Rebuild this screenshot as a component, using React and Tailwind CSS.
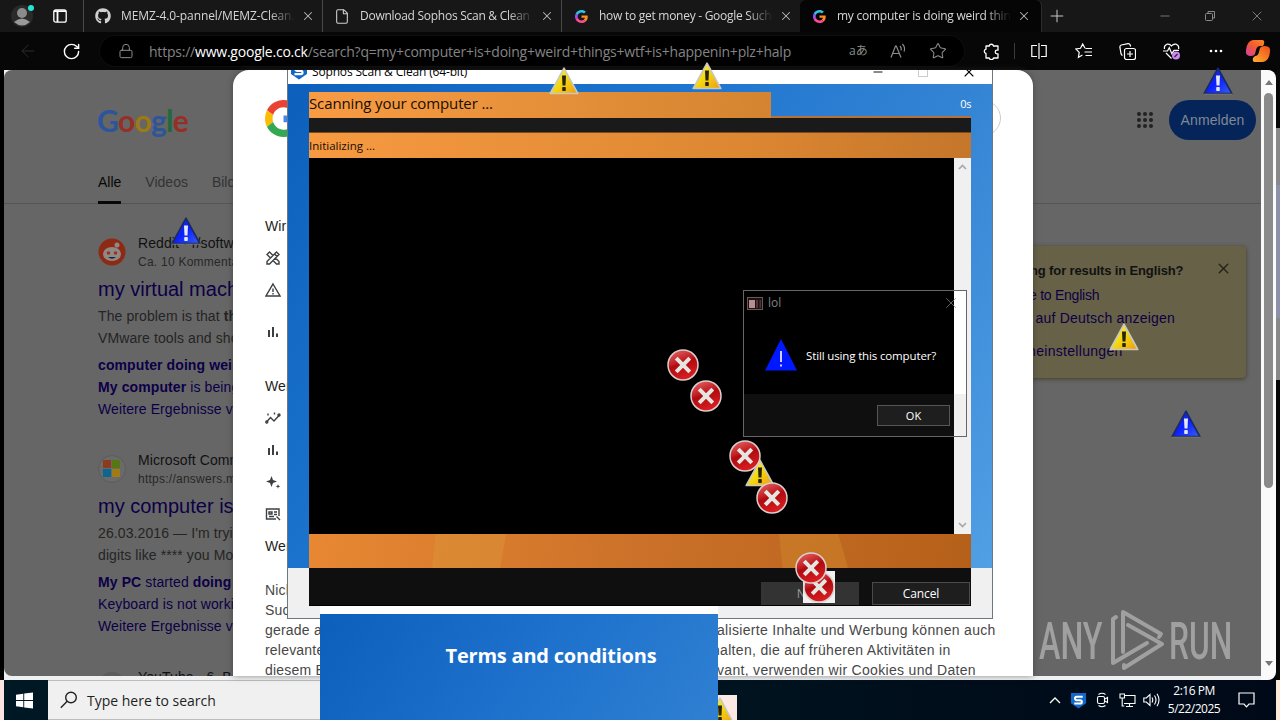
import clsx from 'clsx';
import { Minus, Plus, X, File, Lock, RotateCw, ArrowLeft, Star } from 'lucide-react';
import { FaGithub } from 'react-icons/fa';

const UI = "font-['Open_Sans','Noto_Sans_CJK_JP',sans-serif]";

const tabs = [
  { title: 'MEMZ-4.0-pannel/MEMZ-Clean.exe', icon: 'github', spacing: 'tracking-[-0.1px]' },
  { title: 'Download Sophos Scan & Clean', icon: 'file', spacing: 'tracking-[-0.27px]' },
  { title: 'how to get money - Google Suche', icon: 'google', spacing: 'tracking-[-0.27px]' },
  { title: 'my computer is doing weird things', icon: 'google', spacing: 'tracking-[-0.24px]', active: true },
];

const cursors = [
  { type: 'warning', x: 549, y: 67 },
  { type: 'warning', x: 692, y: 62 },
  { type: 'warning', x: 1109, y: 323 },
  { type: 'info', x: 171, y: 217 },
  { type: 'info', x: 1203, y: 67 },
  { type: 'info', x: 1171, y: 410 },
  { type: 'error', x: 667, y: 349 },
  { type: 'error', x: 690, y: 380 },
  { type: 'warning', x: 745, y: 459 },
  { type: 'error', x: 729, y: 440 },
  { type: 'error', x: 756, y: 482 },
  { type: 'error', x: 803, y: 571, boxed: true },
  { type: 'error', x: 795, y: 552 },
];

function Triangle({ blue }) {
  const id = blue ? 'tri-blue' : 'tri-yellow';
  return (
    <svg width="30" height="28" viewBox="0 0 30 28">
      <defs>
        <linearGradient id={id} x1="0" y1="0" x2="1" y2="1">
          <stop offset="0" stopColor={blue ? '#2030c0' : '#fff45a'} />
          <stop offset="0.5" stopColor={blue ? '#0a20ff' : '#f3d810'} />
          <stop offset="1" stopColor={blue ? '#3a60f0' : '#f09a10'} />
        </linearGradient>
      </defs>
      <path d="M15 1.2 L28.8 26.5 H1.2 Z" fill={`url(#${id})`} stroke={blue ? '#1a2a60' : '#c9c8c0'} strokeWidth="1.6" strokeLinejoin="round" />
      {blue && <path d="M1 27.2H29" stroke="#8a8a70" strokeWidth="0.8" />}
      <path d="M13 8.5h4l-.5 10h-3z" fill={blue ? '#e6e8ff' : '#282408'} />
      <rect x="13.2" y="20" width="3.6" height="4" rx="0.8" fill={blue ? '#e6e8ff' : '#282408'} />
    </svg>
  );
}

function ErrorIcon() {
  return (
    <svg width="32" height="32" viewBox="0 0 32 32">
      <defs>
        <linearGradient id="err" x1="0" y1="0" x2="0.4" y2="1">
          <stop offset="0" stopColor="#e87070" />
          <stop offset="0.45" stopColor="#c22024" />
          <stop offset="0.55" stopColor="#b00a10" />
          <stop offset="1" stopColor="#d81c20" />
        </linearGradient>
      </defs>
      <circle cx="16" cy="16" r="15" fill="url(#err)" stroke="#d9d0cf" strokeWidth="1.5" />
      <path d="M9.2 9.2l13.6 13.6M22.8 9.2L9.2 22.8" stroke="#e6e6e0" strokeWidth="4" />
    </svg>
  );
}

function GoogleG({ size = 14, neon }) {
  const c = neon ? ['#30c0e8', '#a050ff', '#ff4a90', '#ff8a20'] : ['#ea4335', '#fbbc05', '#34a853', '#4285f4'];
  return (
    <svg width={size} height={size} viewBox="0 0 48 48">
      <path fill={c[0]} d="M24 9.5c3.54 0 6.71 1.22 9.21 3.6l6.85-6.85C35.9 2.38 30.47 0 24 0 14.62 0 6.51 5.38 2.56 13.22l7.98 6.19C12.43 13.72 17.74 9.5 24 9.5z" />
      <path fill={c[3]} d="M46.98 24.55c0-1.57-.15-3.09-.38-4.55H24v9.02h12.94c-.58 2.96-2.26 5.48-4.78 7.18l7.73 6c4.51-4.18 7.09-10.36 7.09-17.65z" />
      <path fill={c[1]} d="M10.53 28.59A14.5 14.5 0 0 1 9.77 24c0-1.6.27-3.14.76-4.59l-7.98-6.19A23.94 23.94 0 0 0 0 24c0 3.88.92 7.54 2.56 10.78z" />
      <path fill={c[2]} d="M24 48c6.48 0 11.93-2.13 15.89-5.81l-7.73-6c-2.15 1.45-4.92 2.3-8.16 2.3-6.26 0-11.57-4.22-13.47-9.91l-7.98 6.19C6.51 42.62 14.62 48 24 48z" />
    </svg>
  );
}

function Sophos({ size = 18 }) {
  return (
    <svg width={size} height={size} viewBox="0 0 18 18">
      <path d="M1 1h16v11l-8 5.5L1 12z" fill="#1268c8" />
      <path d="M13.5 5H7.2a1.8 1.8 0 0 0 0 3.8h3.6a1.7 1.7 0 0 1 0 3.4H4.5" stroke="#fff" strokeWidth="2.2" fill="none" />
    </svg>
  );
}

function Tab({ tab, last }) {
  return (
    <div
      className={clsx(
        'flex h-8 items-center pl-[11px]',
        tab.active ? 'w-[242px] border-r border-[#2c2c2c] bg-[#050505]' : 'w-[239px] border-l border-[#4a4a4a]',
        last && 'rounded-t-md'
      )}
    >
      <div className="flex w-4 justify-center text-[#d0d0d0]">
        {tab.icon === 'github' && <FaGithub size={16} />}
        {tab.icon === 'file' && <File size={17} strokeWidth={1.6} />}
        {tab.icon === 'google' && <GoogleG size={13} neon />}
      </div>
      <div className={clsx('ml-[10px] w-[174px] overflow-hidden text-xs whitespace-nowrap text-[#d6d6d6] [mask-image:linear-gradient(to_right,black_85%,transparent)]', tab.spacing)}>
        {tab.title}
      </div>
      <X size={14} strokeWidth={1.8} className="ml-[6px] text-[#b8b8b8]" />
    </div>
  );
}

function TabStrip() {
  return (
    <div className="flex h-8 items-center bg-[#171717]">
      <div className="flex w-[83px] items-center pl-[11px]">
        <svg width="24" height="24" viewBox="0 0 24 24">
          <circle cx="11" cy="12" r="11" fill="#2a2a2a" />
          <circle cx="11" cy="9" r="5" fill="#8b8b8b" />
          <path d="M3 18q8-7 16 0q-8 7-16 0" fill="#9a9a9a" />
          <circle cx="20" cy="4" r="3" fill="#20e8d8" />
        </svg>
        <svg className="ml-[18px]" width="14" height="14" viewBox="0 0 14 14" fill="none" stroke="#fff" strokeWidth="1.3">
          <rect x="0.8" y="0.8" width="12.4" height="12.4" rx="2" />
          <path d="M1 2.2h12M4.5 3v10" strokeWidth="1.8" />
        </svg>
      </div>
      {tabs.map((tab, i) => (
        <Tab key={tab.title} tab={tab} last={i === 3} />
      ))}
      <Plus size={20} strokeWidth={1.2} className="ml-[5px] text-[#c8c8c8]" />
      <div className="ml-auto flex items-center gap-[32px] pr-[15px] text-[#8a8a8a]">
        <Minus size={14} strokeWidth={1.4} />
        <svg width="13" height="12" viewBox="0 0 13 12" fill="none" stroke="currentColor">
          <rect x="1.5" y="3.5" width="7" height="7" rx="1" />
          <path d="M4 3V1.5h6.5V8H9" />
        </svg>
        <X size={16} strokeWidth={1.3} />
      </div>
    </div>
  );
}

function Toolbar() {
  return (
    <div className="flex h-[38px] items-center bg-[#070707]">
      <ArrowLeft size={20} strokeWidth={1} className="ml-[18px] text-[#333]" />
      <RotateCw size={19} strokeWidth={1.8} className="ml-6 text-white" />
      <div className="ml-[19px] flex h-[30px] w-[864px] items-center rounded-full bg-black pl-[18px] text-[#8c8c8c] shadow-[0_0_0_1px_#0e0e0e]">
        <Lock size={16} strokeWidth={1.5} />
        <div className="ml-[15px] w-[700px] shrink-0 text-[14px] tracking-[-0.22px] whitespace-nowrap text-[#848484]">
          https://<span className="text-white">www.google.co.ck</span>/search?q=my+computer+is+doing+weird+things+wtf+is+happenin+plz+halp
        </div>
        <div className="w-[19px] text-xs leading-none whitespace-nowrap">aあ</div>
        <svg className="ml-[22px]" width="17" height="16" viewBox="0 0 17 16" fill="none" stroke="currentColor" strokeWidth="1.2">
          <path d="M1 14.5 5.5 3h.8L11 14.5M2.6 10.5h6.8M10 3q2 2 1 4.5M12.3 1q3.3 3 1.8 7.5" />
        </svg>
        <Star size={18} strokeWidth={1.4} className="ml-[22px]" />
      </div>
      <div className="ml-[19px] flex items-center text-white">
        <svg width="17" height="17" viewBox="0 0 17 17" fill="none" stroke="currentColor" strokeWidth="1.3" strokeLinejoin="round">
          <path d="M3 3h3.2a2.2 2.2 0 0 1 4.3 0H15v4.2h-1a1.8 1.8 0 0 0 0 3.6h1V15h-4.5a2.2 2.2 0 0 1-4.3 0H3v-4.5a2.2 2.2 0 0 1 0-4.3z" />
        </svg>
        <div className="ml-[14px] h-4 w-px bg-[#3a3a3a]" />
        <svg className="ml-[16px]" width="16" height="16" viewBox="0 0 16 16" fill="none" stroke="currentColor" strokeWidth="1.2">
          <path d="M8 0v16M6 2.5H.8v11H6M10 2.5h5.2v11H10" />
        </svg>
        <svg className="ml-[28px]" width="17" height="16" viewBox="0 0 17 16" fill="none" stroke="currentColor" strokeWidth="1.2">
          <path d="M10 5.3 7.7 1 5.5 5.3.8 6l3.4 3.4-.8 5 4-2.3M10.5 5.5H17M9.5 9H17M10.5 12.5H17" />
        </svg>
        <svg className="ml-[27px]" width="17" height="17" viewBox="0 0 17 17" fill="none" stroke="currentColor" strokeWidth="1.2">
          <rect x="5.5" y="5.5" width="11" height="11" rx="2" />
          <path d="M11 8v6M8 11h6M3.5 12.5Q2.4 12 2 10.5L.9 4.2Q.7 2.6 2.3 2L9 .7q1.7-.2 2.2 1.3l.4 1.5" />
        </svg>
        <svg className="ml-[27px]" width="18" height="17" viewBox="0 0 18 17" fill="none" stroke="currentColor" strokeWidth="1.2">
          <path d="M1.5 6Q.8 2.4 4 1.2 6.8.6 8.5 3 10.4.5 13.2 1.2q3.1 1.2 2.4 4.8M3 10l5.5 5.5M0 8h4.5L6.3 4.7l2.5 6L11 7.3h5" />
          <circle cx="13" cy="12.5" r="4" fill="#c98bea" stroke="none" />
          <path d="M11.5 14l3-3" stroke="#3b1650" />
        </svg>
        <svg className="ml-[27px]" width="16" height="4" viewBox="0 0 16 4" fill="currentColor">
          <circle cx="3" cy="2" r="1.3" /><circle cx="8" cy="2" r="1.3" /><circle cx="13" cy="2" r="1.3" />
        </svg>
        <svg className="ml-[21px]" width="26" height="24" viewBox="0 0 26 24">
          <defs>
            <linearGradient id="cop1" x1="1" y1="0" x2="0" y2="1"><stop stopColor="#ff8a20" /><stop offset="0.5" stopColor="#f05a30" /><stop offset="1" stopColor="#d83bb0" /></linearGradient>
            <linearGradient id="cop2" x1="0" y1="1" x2="1" y2="0"><stop stopColor="#ffb030" /><stop offset="1" stopColor="#f04a18" /></linearGradient>
          </defs>
          <path d="M8 1h9q3 0 2 4l-1 2h-3q-3 0-4 4l-1 4q-1 2-4 2-6 0-5-6 1-9 7-10" fill="url(#cop1)" />
          <path d="M18 23H10q-3 0-2-4l2-2q3 0 4-4l1-4q1-2 5-2 6 0 5 6-1 9-7 10" fill="url(#cop2)" />
        </svg>
      </div>
    </div>
  );
}

function Result({ icon, site, url, title, lines, links }) {
  return (
    <div className="h-[217px] shrink-0 whitespace-nowrap">
      <div className="flex">
        <div className="mt-1 h-7 w-7">{icon}</div>
        <div className="ml-3">
          <div className="h-[19px] text-sm leading-[19px] tracking-[0.1px] text-[#111]">{site}</div>
          <div className="h-[18px] text-xs leading-[18px] tracking-[0.25px] text-[#262626]">{url}</div>
        </div>
      </div>
      <div className="mt-1 h-7 text-xl leading-7 text-[#0c0046]">{title}</div>
      <div className="mt-0.5 text-sm leading-[22px] tracking-[0.1px] text-[#242424]">
        {lines.map((line, i) => <div key={i}>{line}</div>)}
      </div>
      <div className="mt-[5px] text-sm leading-[22px] tracking-[0.1px] text-[#0c0046]">
        {links.map((link, i) => <div key={i}>{link}</div>)}
      </div>
    </div>
  );
}

const redditIcon = (
  <svg width="28" height="28" viewBox="0 0 28 28">
    <circle cx="14" cy="14" r="13.5" fill="#8e2a14" />
    <ellipse cx="14" cy="16" rx="9" ry="7" fill="#8f8a88" />
    <circle cx="19" cy="7" r="2.5" fill="#8f8a88" />
    <circle cx="10.5" cy="15" r="1.8" fill="#a03018" />
    <circle cx="17.5" cy="15" r="1.8" fill="#a03018" />
    <path d="M10 19q4 3.5 8 0z" fill="#102830" />
  </svg>
);

const microsoftIcon = (
  <svg width="28" height="28" viewBox="0 0 28 28">
    <circle cx="14" cy="14" r="13.5" fill="#6a6a6a" stroke="#5c5c5c" />
    <path d="M5 5h8v8H5z" fill="#8e3a1c" />
    <path d="M14 5h8v8h-8z" fill="#557812" />
    <path d="M5 14h8v8H5z" fill="#0b6790" />
    <path d="M14 14h8v8h-8z" fill="#a07a12" />
  </svg>
);

function SearchPage() {
  return (
    <div className="flex h-[606px] w-[1257px] flex-col overflow-hidden rounded-tl-lg rounded-bl-lg bg-[#666] font-['Liberation_Sans',sans-serif]">
      <div className="flex h-[98px] shrink-0 items-center justify-between pt-px pr-[5px] pl-[93px]">
        <div className="font-['Lato',sans-serif] text-[30px] leading-none font-bold tracking-[-0.7px] text-[#2c559c]">
          G<span className="text-[#962f27]">o</span><span className="text-[#9c7a14]">o</span>g<span className="text-[#24693a]">l</span><span className="text-[#962f27]">e</span>
        </div>
        <div className="flex items-center gap-4">
          <svg width="16" height="16" viewBox="0 0 16 16" fill="#222">
            {[2, 8, 14].map((x) => [2, 8, 14].map((y) => <circle key={`${x}-${y}`} cx={x} cy={y} r="2" />))}
          </svg>
          <div className="flex h-10 w-[87px] items-center justify-center rounded-full bg-[#05245a] text-sm tracking-[0.1px] text-[#7f8894]">Anmelden</div>
        </div>
      </div>
      <div className="flex h-9 shrink-0 gap-6 border-b border-[#555] pl-[94px] text-sm leading-7 text-[#333]">
        <div className="h-9 border-b-[3px] border-[#080808] text-[#080808]">Alle</div>
        <div>Videos</div>
        <div>Bilder</div>
      </div>
      <div className="flex justify-between pr-[15px] pl-[94px]">
        <div className="pt-[30px]">
          <Result
            icon={redditIcon}
            site="Reddit · r/software"
            url="Ca. 10 Kommentare"
            title="my virtual machine"
            lines={[<>The problem is that <b>things</b></>, 'VMware tools and should']}
            links={[<b>computer doing weird</b>, <><b>My computer</b> is being</>, 'Weitere Ergebnisse von']}
          />
          <Result
            icon={microsoftIcon}
            site="Microsoft Community"
            url="https://answers.microsoft"
            title="my computer is"
            lines={["26.03.2016 — I'm trying", 'digits like **** you Mobile']}
            links={[<><b>My PC</b> started <b>doing</b></>, 'Keyboard is not working', 'Weitere Ergebnisse von']}
          />
          <Result icon={<div className="h-7 w-7 rounded-full bg-[#5c5c5c]" />} site="YouTube · 6. Beitrag" url="" title="" lines={[]} links={[]} />
        </div>
        <div className="mt-[42px] flex h-[132px] w-[300px] justify-between rounded-sm bg-[#676147] pt-[13px] pr-[14px] shadow-[0_1px_4px_#403c2a]">
          <div className="flex w-[236px] flex-col text-sm tracking-[0.2px] whitespace-nowrap text-[#0c0046]">
            <div className="h-[23px] pl-[50px] text-[13px] leading-[23px] font-bold tracking-[-0.13px] text-[#111]">Looking for results in English?</div>
            <div className="mt-[2px] h-[23px] pl-[43px] leading-[23px] tracking-[-0.25px]">Change to English</div>
            <div className="h-[23px] pl-[44px] leading-[23px]">Weiter auf Deutsch anzeigen</div>
            <div className="mt-[10px] h-[23px] pl-[44px] leading-[23px] tracking-[0.3px]">Spracheinstellungen</div>
          </div>
          <X size={17} strokeWidth={2} className="mt-[1px] text-[#26241a]" />
        </div>
      </div>
    </div>
  );
}

function ListIcon({ kind }) {
  return (
    <svg width="16" height="16" viewBox="0 0 16 16" fill="none" stroke="#3c4043" strokeWidth="1.4">
      {kind === 'tools' && <path d="M5.5 8L2 4.5 4.5 2 8 5.5M8 10.5l3.5 3.5H14v-2.5L10.5 8M2 14v-2.5L11.5 2 14 4.5 4.5 14zM9.5 4L12 6.5" />}
      {kind === 'warn' && <><path d="M8 2L15 14H1z" /><path d="M8 6.5v3.5M8 11v1.5" /></>}
      {kind === 'bars' && <path d="M4 6v7M8 3v10M12 9.5V13" strokeWidth="2" />}
      {kind === 'trend' && <><path d="M1.5 12l4-4.5L9 11l5.5-6" /><circle cx="1.8" cy="12" r="1" /><circle cx="14" cy="5" r="1" /><path d="M3 3.5v2M9.5 2.5v2" /></>}
      {kind === 'spark' && <path d="M6.5 2l1.5 4 4 1.5-4 1.5-1.5 4-1.5-4-4-1.5 4-1.5zM13 10l.6 1.8 1.8.6-1.8.6-.6 1.8-.6-1.8-1.8-.6 1.8-.6z" fill="#3c4043" stroke="none" />}
      {kind === 'card' && <path d="M11 13H1.5V3h12.5v7M4 6h3v2H4zM9 6h3M9 8.5h3M4 10.5h5M11.5 10.5l3.5 3.5" />}
    </svg>
  );
}

function ConsentDialog() {
  return (
    <div className="absolute top-[70px] left-[233px] h-[606px] w-[800px] overflow-hidden rounded-t-2xl bg-white px-8 font-['Liberation_Sans',sans-serif] text-sm tracking-[0.1px] whitespace-nowrap text-[#1f1f1f] shadow-[0_0_6px_#3338]">
      <div className="mt-[30px] flex h-9 justify-between">
        <GoogleG size={37} />
        <div className="h-9 w-24 rounded-full border border-[#ccc]" />
      </div>
      <div className="mt-[80px] h-5 leading-5">Wir verwenden Cookies und Daten, um</div>
      <div className="mt-[14px] flex flex-col">
        <div className="flex h-8 items-start"><ListIcon kind="tools" /></div>
        <div className="flex h-[42px] items-start"><ListIcon kind="warn" /></div>
        <div className="flex h-[52px] items-start"><ListIcon kind="bars" /></div>
      </div>
      <div className="h-5 leading-5">Wenn Sie „Alle akzeptieren“ auswählen</div>
      <div className="mt-[14px] flex h-[126px] flex-col gap-4">
        <ListIcon kind="trend" />
        <ListIcon kind="bars" />
        <ListIcon kind="spark" />
        <ListIcon kind="card" />
      </div>
      <div className="h-5 leading-5">Wenn Sie „Alle ablehnen“ auswählen</div>
      <div className="mt-6 leading-5 tracking-[0.2px] text-[#474747]">
        <div>Nicht personalisierte Inhalte</div>
        <div>Suchanfragen</div>
        <div className="flex"><span className="w-[452px]">gerade ansehen</span><span className="tracking-[0.31px]">alisierte Inhalte und Werbung können auch</span></div>
        <div className="flex"><span className="w-[447px]">relevantere</span><span className="tracking-[0.31px]">halten, die auf früheren Aktivitäten in</span></div>
        <div className="flex"><span className="w-[452px]">diesem Browser</span><span className="tracking-[0.31px]">vant, verwenden wir Cookies und Daten</span></div>
      </div>
    </div>
  );
}

function LolDialog() {
  return (
    <div className="absolute top-[290px] left-[743px] flex h-[147px] w-[224px] flex-col border border-[#6a6464] bg-[linear-gradient(to_right,black_210px,white_210px)] text-xs text-white">
      <div className="flex h-6 items-center pl-[3px]">
        <svg width="16" height="13" viewBox="0 0 16 13">
          <rect x="0.5" y="0.5" width="15" height="12" fill="#1c1013" stroke="#6e5558" />
          <path d="M2 3h6v8H2z" fill="#b48e92" />
          <path d="M9 3h2v8H9zM12.5 3h1.5v8h-1.5z" fill="#4a3438" />
        </svg>
        <span className="ml-[5px] text-[#808080]">lol</span>
        <X size={18} strokeWidth={1} className="mr-[6px] ml-auto text-[#808080]" />
      </div>
      <div className="flex h-[79px] items-center pt-[2px] pl-[21px]">
        <svg className="-mt-[2px]" width="32" height="32" viewBox="0 0 32 32">
          <path d="M16 0L32 31.5H0z" fill="#0018ff" />
          <path d="M16 12v11M16 25.5v2" stroke="#fff" strokeWidth="1.6" />
        </svg>
        <span className="ml-[9px] text-[11.5px] tracking-[-0.14px] whitespace-nowrap">Still using this computer?</span>
      </div>
      <div className="flex flex-1 items-center justify-end bg-[linear-gradient(to_right,#0f0f0f_210px,#f0f0f0_210px)] pr-4">
        <div className="flex h-[21px] w-[73px] items-center justify-center border border-[#565656] bg-[#1e1e1e] pt-[2px] text-[11px]">OK</div>
      </div>
    </div>
  );
}

function Chevron({ down }) {
  return (
    <svg width="9" height="6" viewBox="0 0 9 6" fill="none" stroke="#a9a9a9" strokeWidth="1.7">
      <path d={down ? 'M1 1l3.5 3.5L8 1' : 'M1 5l3.5-3.5L8 5'} />
    </svg>
  );
}

function SophosWindow() {
  return (
    <div className="absolute top-[70px] left-[287px] flex h-[549px] w-[706px] flex-col overflow-hidden border-x border-b border-[#6d7780] bg-[#f0f0f0]">
      <div className="flex h-[14px] shrink-0 items-center bg-white text-black">
        <div className="-mt-[13px] ml-[2px]"><Sophos /></div>
        <span className="-mt-[11px] ml-[4px] text-xs tracking-[-0.16px]">Sophos Scan &amp; Clean (64-bit)</span>
        <div className="mr-[15px] ml-auto flex items-center gap-[33px]">
          <Minus size={14} strokeWidth={1.6} className="-mt-[11px]" />
          <div className="-mt-[10px] h-[10px] w-[10px] border border-[#ccc]" />
          <X size={16} strokeWidth={1.6} className="-mt-[10px]" />
        </div>
      </div>
      <div className="h-[484px] shrink-0 bg-[linear-gradient(125deg,#0c60bb_0%,#1c74cf_35%,#3383d4_65%,#519fe4_100%)] px-[21px] pt-2">
        <div className="flex h-[514px] w-[662px] flex-col">
          <div className="flex h-[26px] justify-between">
            <div className="flex h-[26px] w-[462px] items-center bg-[linear-gradient(100deg,#f89c44,#d48430)] pb-[3px] text-[15px] tracking-[-0.12px] text-[#1a0d04]">Scanning your computer ...</div>
            <div className="flex h-[26px] flex-1 items-center justify-end border-b-2 border-[#b87038] text-[11px] tracking-[-0.4px] text-white">0s</div>
          </div>
          <div className="h-[15px] border-b border-[#7a4a20] bg-[#1a1a1a]" />
          <div className="flex h-[25px] items-center bg-[linear-gradient(100deg,#f79a42,#dd8732_65%,#c4762a)] text-[11.5px] text-[#1a0d04]">Initializing ...</div>
          <div className="flex h-[376px] bg-black">
            <div className="ml-auto flex w-[17px] flex-col items-center justify-between bg-[#f0f0f0] py-[6px]">
              <Chevron />
              <Chevron down />
            </div>
          </div>
          <div className="flex h-[34px] bg-[linear-gradient(100deg,#e88833,#cb7129_50%,#b5601a)]">
            <div className="ml-[123px] h-full w-[74px] bg-[#db9036]/60 [clip-path:polygon(5%_0,100%_0,92%_100%,0_100%)]" />
            <div className="ml-[273px] h-full w-[69px] bg-[#cc8028]/60 [clip-path:polygon(0_0,86%_0,100%_100%,5%_100%)]" />
          </div>
          <div className="flex h-[38px] items-start justify-end gap-[13px] border-b border-black bg-[#0f0f0f] pt-[14px] pr-px text-xs">
            <div className="flex h-[23px] w-[98px] items-center justify-center border border-[#343434] bg-[#333] text-[#999]">Next</div>
            <div className="flex h-[23px] w-[98px] items-center justify-center border border-[#4a4a4a] bg-[#1e1e1e] tracking-[-0.1px] text-white">Cancel</div>
          </div>
        </div>
      </div>
    </div>
  );
}

function Taskbar() {
  return (
    <div className="flex h-10 bg-[linear-gradient(to_right,#001420_55%,#000d1a_75%,#000918)]">
      <div className="w-1 bg-[#fde6e2]" />
      <div className="flex w-11 items-center justify-center bg-[#001824] pr-[3px]">
        <svg width="17" height="17" viewBox="0 0 17 17" fill="#fff">
          <path d="M0 2.8l7.3-1V8H0zM8.2 1.6L17 .4V8H8.2zM0 9h7.3v6.2L0 14.2zM8.2 9H17v7.6l-8.8-1.2z" />
        </svg>
      </div>
      <div className="flex w-[344px] items-center border-y border-[#bcbcbc] bg-[#f0f0f0] pl-[12px] text-[#1f1f1f]">
        <svg width="18" height="18" viewBox="0 0 18 18" fill="none" stroke="#222" strokeWidth="1.4">
          <circle cx="11" cy="6.5" r="5.3" />
          <path d="M7.2 10.3L.8 16.8" />
        </svg>
        <span className="ml-[9px] text-[14px]">Type here to search</span>
      </div>
      <div className="ml-auto flex items-center pr-[21px] text-white">
        <svg width="12" height="8" viewBox="0 0 12 8" fill="none" stroke="currentColor" strokeWidth="1.3"><path d="M1 7l5-5 5 5" /></svg>
        <div className="ml-[9px]"><Sophos size={17} /></div>
        <svg className="ml-[9px]" width="14" height="16" viewBox="0 0 14 16" fill="none" stroke="currentColor" strokeWidth="1.1">
          <rect x="1.5" y="4.5" width="7" height="7" rx="1.5" />
          <path d="M9 7l2.5-1.5v5L9 9M2.5 2.5q3.5-2.5 7 0M2.5 13.5q3.5 2.5 7 0" />
        </svg>
        <svg className="ml-[9px]" width="17" height="15" viewBox="0 0 17 15" fill="none" stroke="currentColor" strokeWidth="1.1">
          <path d="M6 2.5h10v8H5M10.5 10.5v3M7 13.5h7M1 1h4.5v4H1zM3.2 5v8h2" />
        </svg>
        <svg className="ml-[7px]" width="17" height="14" viewBox="0 0 17 14" fill="none" stroke="currentColor" strokeWidth="1.1">
          <path d="M.8 5h2.5L7 1.5v11L3.3 9H.8zM9 4.5q1.5 2.5 0 5M11.5 2.5q3 4.5 0 9M14 .8q4 6.2 0 12.4" />
        </svg>
        <div className="ml-[1px] flex w-[66px] flex-col items-center text-xs leading-[18px] tracking-[-0.5px] whitespace-nowrap">
          <span>2:16 PM</span>
          <span>5/22/2025</span>
        </div>
        <svg className="ml-[11px]" width="17" height="16" viewBox="0 0 17 16" fill="none" stroke="currentColor" strokeWidth="1.2">
          <path d="M1 1h15v11h-5l-2.5 2.8L6 12H1z" />
        </svg>
      </div>
      <div className="w-1 bg-[#fdebd8]" />
    </div>
  );
}

function Watermark() {
  return (
    <div className="absolute top-[608px] left-[1039px] flex h-[64px] w-[193px] items-center font-['Roboto',sans-serif] text-[52px] leading-none font-medium text-[#a6a6a6]/90">
      <div className="w-[64px] pt-1"><div className="w-max origin-left scale-x-[0.62]">ANY</div></div>
      <svg className="ml-[7px] shrink-0" width="56" height="62" viewBox="0 0 56 62" fill="none" stroke="currentColor" strokeWidth="4" strokeLinejoin="round" strokeLinecap="round">
        <path d="M6 8L3 10v44l34-20" />
        <path d="M13 43V3l38 22-2 3M18 16l34 19-38 24v-3" />
      </svg>
      <div className="ml-[3px] w-[62px] pt-1"><div className="w-max origin-left scale-x-[0.61]">RUN</div></div>
    </div>
  );
}

function App() {
  return (
    <div className={clsx('relative flex h-[720px] w-[1280px] flex-col overflow-hidden bg-black', UI)}>
      <TabStrip />
      <Toolbar />
      <div className="flex h-[610px] pl-1">
        <div className="w-[1257px] bg-[#eef0f2]"><SearchPage /></div>
        <div className="flex w-[15px] flex-col items-center rounded-r-lg bg-[#fafafa] pt-[10px]">
          <div className="border-x-4 border-b-[5px] border-x-transparent border-b-[#777]" />
          <div className="mt-2 h-[395px] w-[9px] rounded-full bg-[#8a8a8a]" />
          <div className="mt-auto mb-[14px] border-x-4 border-t-[5px] border-x-transparent border-t-[#777]" />
        </div>
        <div className="w-1 bg-[linear-gradient(#080808_58px,#888_58px,#888_115px,#8c90a8_115px,#8c90a8_248px,#888_248px,#888_310px,#080808_310px)]" />
      </div>
      <Taskbar />

      <Watermark />
      <ConsentDialog />
      <SophosWindow />
      <LolDialog />

      {/* stray triangle left on the taskbar */}
      <div className="absolute top-[695px] left-[705px] h-[25px] w-8 bg-[#fbeae4] pt-[2px]"><Triangle /></div>

      <div className="absolute top-[606px] left-[320px] h-[114px] w-[398px] border-t-8 border-white bg-[linear-gradient(125deg,#0c60bb,#1b6fcb_45%,#2f80d2)] pt-[27px] text-center">
        <span className="ml-[64px] text-[20px] font-bold tracking-[-0.22px] whitespace-nowrap text-white">Terms and conditions</span>
      </div>

      {cursors.map((c, i) => (
        <div key={i} className={clsx('absolute', c.boxed && 'bg-[#f0f0f0]')} style={{ left: c.x, top: c.y }}>
          {c.type === 'error' ? <ErrorIcon /> : <Triangle blue={c.type === 'info'} />}
        </div>
      ))}
    </div>
  );
}

export default App;
